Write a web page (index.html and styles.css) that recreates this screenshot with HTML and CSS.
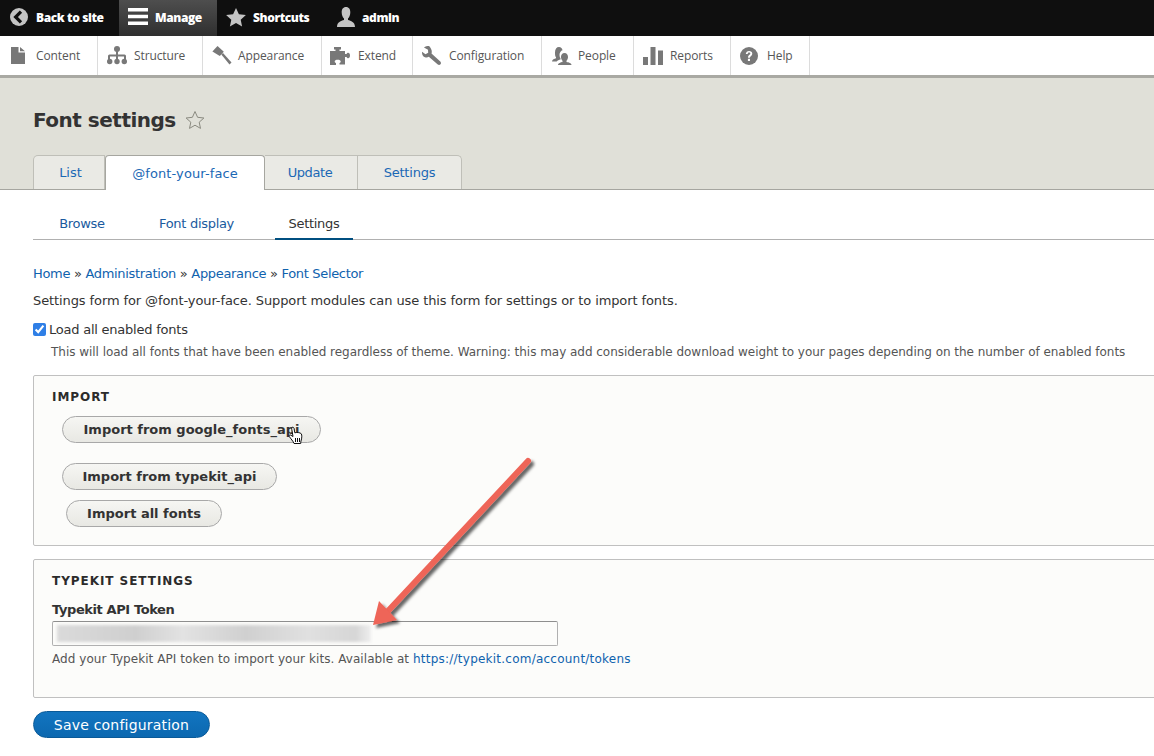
FILE: index.html
```html
<!DOCTYPE html>
<html>
<head>
  <meta charset="utf-8">
  <meta name="viewport" content="width=device-width, initial-scale=1.0">
  <title>Font settings</title>
  <link rel="stylesheet" href="styles.css">
</head>
<body>
  <!-- black toolbar -->
  <div class="toolbar">
    <a class="bar-item back">
      <svg width="20" height="20" viewBox="0 0 20 20"><circle cx="10" cy="10" r="9" fill="#c4c4c4"/><path d="M12 4.600 6.600 10l5.400 5.400" fill="none" stroke="#0f0f0f" stroke-width="3.200"/></svg>
      Back to site
    </a>
    <a class="bar-item manage">
      <svg width="20" height="18" viewBox="0 0 20 18"><path d="M0 0h20v3.400H0zM0 6.800h20v3.400H0zM0 13.600h20V17H0z" fill="#fff"/></svg>
      Manage
    </a>
    <a class="bar-item shortcuts">
      <svg width="20" height="19" viewBox="0 0 20 19"><path d="M10 0l2.900 6.300 7 .8-5.200 4.600 1.400 6.800L10 15.100l-6.100 3.400 1.400-6.800L.1 7.100l7-.8z" fill="#c4c4c4"/></svg>
      Shortcuts
    </a>
    <a class="bar-item user">
      <svg width="20" height="20" viewBox="0 0 20 20"><path d="M10 0c3 0 4.300 2.400 4.300 5.400 0 2.600-1 4.700-2.300 6v1.700c2.800.8 7 2 7 6.900H1c0-4.900 4.200-6.100 7-6.900v-1.700c-1.300-1.300-2.300-3.400-2.300-6C5.700 2.400 7 0 10 0z" fill="#c4c4c4"/></svg>
      admin
    </a>
  </div>

  <!-- admin menu -->
  <div class="tray">
    <a class="tray-item i-content">
      <svg width="14" height="17" viewBox="0 0 14 17"><path d="M0 0h7.500v5.500H14V17H0zM9 0l5 4.200H9z" fill="#787878"/></svg>
      Content
    </a>
    <a class="tray-item i-structure">
      <svg width="20" height="19" viewBox="0 0 20 19"><g fill="#787878"><circle cx="10" cy="3" r="3"/><circle cx="2.700" cy="15.500" r="2.700"/><circle cx="10" cy="15.500" r="2.700"/><circle cx="17.300" cy="15.500" r="2.700"/><path d="M9 5h2v3.500h6.500a1.500 1.500 0 0 1 1.500 1.500v4h-2v-3.500h-6V14H9v-3.500H3V14H1v-4a1.500 1.500 0 0 1 1.500-1.500H9z"/></g></svg>
      Structure
    </a>
    <a class="tray-item i-appearance">
      <svg width="20" height="19" viewBox="0 0 20 19"><g fill="#787878"><path d="M5.500 0 11.800 5.800 7.800 10 .4 5.600z"/><path d="M9.300 8.500 11 7l8.500 9.500-2 2z"/></g></svg>
      Appearance
    </a>
    <a class="tray-item i-extend">
      <svg width="20" height="18" viewBox="0 0 20 18"><path d="M0 4h5.500V2.500H4V0h7v2.500H9.500V4H15v3h1.500c.5-1 1-1.300 1.700-1.300 1 0 1.800 1 1.800 2.800 0 1.800-.8 2.800-1.800 2.800-.7 0-1.200-.3-1.700-1.300H15v7.500H9.500v-1.500c1-.5 1.200-1 1.200-1.600 0-.9-1.200-1.600-3-1.600s-3 .7-3 1.600c0 .6.300 1.100 1.300 1.600V18H0z" fill="#787878"/></svg>
      Extend
    </a>
    <a class="tray-item i-config">
      <svg width="20" height="19" viewBox="0 0 20 19"><path d="M6.800 0C4.500-.3 2 1.500 2 1.500l4 2.300.2 3L3.500 8.300 0 5.800C-.2 8.500 1 10.500 3 11.200c1.300.4 2.700.2 3.800-.4l9 7.700c.8.700 2 .6 2.700-.2.700-.8.600-2-.2-2.700L9.500 7.500c.4-1.200.4-2.700-.2-4C8.800 2 8 .5 6.800 0z" fill="#787878"/></svg>
      Configuration
    </a>
    <a class="tray-item i-people">
      <svg width="20" height="18" viewBox="0 0 20 18"><g fill="#787878"><path d="M12.500 6c2.300 0 3.500 1.800 3.500 4 0 1.500-.6 2.800-1.500 3.700V15c2 .4 5 1 5 3H6c0-2 3-2.600 4.500-3v-1.300C9.600 12.800 9 11.500 9 10c0-2.200 1.200-4 3.500-4z"/><path d="M7 0c2 0 3.300 1.300 3.500 3.300-1.700.5-3 2.300-3 4.700 0 1.300.4 2.600 1 3.500v1c-1.500.4-3 1-3.800 2H0c0-2 2.500-2.800 4-3.200v-1C3.200 9.400 3 8 3 5.500 3 2 4.500 0 7 0z"/></g></svg>
      People
    </a>
    <a class="tray-item i-reports">
      <svg width="20" height="18" viewBox="0 0 20 18"><path d="M0 10h5v8H0zM7.500 0h5v18h-5zM15 3.500h5V18h-5z" fill="#787878"/></svg>
      Reports
    </a>
    <a class="tray-item i-help">
      <svg width="18" height="18" viewBox="0 0 18 18"><circle cx="9" cy="9" r="9" fill="#787878"/><path d="M5.800 6.900C6 5 7.300 4 9.100 4c1.900 0 3.200 1.100 3.200 2.700 0 2.300-2.400 2.300-2.400 4H8c0-2.800 2.300-2.800 2.300-4.100 0-.6-.5-1-1.200-1-.8 0-1.300.5-1.400 1.300zM7.900 11.700H10v2.200H7.900z" fill="#fff"/></svg>
      Help
    </a>
  </div>

  <div class="page-head">
    <h1 class="page-title">Font settings
      <svg class="title-star" width="20" height="20" viewBox="0 0 20 19"><path d="M10 1l2.600 5.800 6.300.7-4.700 4.200 1.300 6.200L10 14.700l-5.500 3.200 1.300-6.200L1.100 7.500l6.300-.7z" fill="none" stroke="#8a8a80"/></svg>
    </h1>
    <div class="tabs">
      <a class="tab t-list">List</a>
      <a class="tab t-font active">@font-your-face</a>
      <a class="tab t-update">Update</a>
      <a class="tab t-settings">Settings</a>
    </div>
  </div>

  <div class="content">
    <div class="subtabs">
      <a class="subtab s-browse">Browse</a>
      <a class="subtab s-display">Font display</a>
      <a class="subtab s-settings active">Settings</a>
    </div>

    <div class="breadcrumb"><a>Home</a> » <a>Administration</a> » <a>Appearance</a> » <a>Font Selector</a></div>
    <p class="intro">Settings form for @font-your-face. Support modules can use this form for settings or to import fonts.</p>

    <label class="check-row"><input type="checkbox" checked> Load all enabled fonts</label>
    <p class="description check-desc">This will load all fonts that have been enabled regardless of theme. Warning: this may add considerable download weight to your pages depending on the number of enabled fonts</p>

    <div class="panel panel-import">
      <h2 class="panel-title">IMPORT</h2>
      <div class="buttons">
        <a class="button b-google">Import from google_fonts_api</a>
        <a class="button b-typekit">Import from typekit_api</a>
        <a class="button b-all">Import all fonts</a>
      </div>
    </div>

    <div class="panel panel-typekit">
      <h2 class="panel-title">TYPEKIT SETTINGS</h2>
      <label class="field-label">Typekit API Token</label>
      <div class="token-input"><div class="token-blur"></div></div>
      <p class="description token-desc">Add your Typekit API token to import your kits. Available at <a>https://typekit.com/account/tokens</a></p>
    </div>

    <a class="save">Save configuration</a>
  </div>

  <!-- annotations on top of the screenshot -->
  <svg class="cursor" width="16" height="20" viewBox="0 0 16 20"><path d="M4 1.500c.8-.6 1.800-.2 2 .8l.8 4.500c1.500-.6 5.500-.4 6.500 1 .8 1.200.6 4.500-.3 7.200-.2.700-.3 1.500-.3 2.500H6c-.5-2-3.500-5-4.700-7-.5-1 .4-2 1.500-1.300L5 10.500 3.800 3.500c-.1-.8-.2-1.600.2-2z" fill="#fff" stroke="#111" stroke-width="1"/><path d="M7.500 12v4M9.500 12v4M11.500 12v4" stroke="#111"/></svg>
  <svg class="arrow" width="190" height="190" viewBox="0 0 190 190">
    <defs><filter id="arrow-shadow" x="-10%" y="-10%" width="125%" height="125%"><feDropShadow dx="3" dy="3" stdDeviation="1.500" flood-color="#000" flood-opacity=".6"/></filter></defs>
    <g filter="url(#arrow-shadow)" fill="#ee6558">
      <path d="M166 10 26 160" stroke="#ee6558" stroke-width="6" stroke-linecap="round"/>
      <path d="M11 174 17 150 35 169z"/>
    </g>
  </svg>
</body>
</html>
```

FILE: styles.css
```css
* {
    box-sizing: border-box;
}
html, body {
    overflow: hidden;
}
body {
    margin: 0;
    height: 756px;
    position: relative;
    background-color: #fff;
    font-family: "DejaVu Sans", sans-serif;
    font-size: 13px;
    color: #333;
}
a {
    color: #0f62ae;
    text-decoration: none;
}
p {
    margin: 0;
}

/* Toolbar */
.toolbar {
    display: flex;
    height: 36px;
    background-color: #0f0f0f;
}
.bar-item {
    display: flex;
    align-items: center;
    gap: 7px;
    padding: 0 0 2px 9px;
    color: #fff;
    font-family: "Open Sans", sans-serif;
    font-size: 12px;
    font-weight: 800;
    letter-spacing: -0.4px;
}
.back {
    width: 119px;
}
.manage {
    width: 98px;
    background: linear-gradient(#4e4e4e, #2f2f2f);
}
.shortcuts {
    width: 110px;
}
.user {
    width: auto;
    gap: 6px;
}

/* Tray */
.tray {
    display: flex;
    height: 42px;
    border-bottom: 3px solid #a9a9a3;
    background-color: #fff;
}
.tray-item {
    display: flex;
    align-items: center;
    gap: 8px;
    padding-left: 11px;
    border-right: 1px solid #dcdcdc;
    color: #565656;
    font-family: "Open Sans", sans-serif;
    font-size: 12px;
    letter-spacing: -0.1px;
}
.i-content { width: 98px; gap: 11px; }
.i-structure { width: 105px; padding-left: 9px; gap: 7px; }
.i-appearance { width: 119px; padding-left: 9px; gap: 6px; }
.i-extend { width: 91px; padding-left: 8px; gap: 8px; }
.i-config { width: 129px; padding-left: 9px; gap: 7px; }
.i-people { width: 92px; padding-left: 10px; gap: 6px; }
.i-reports { width: 97px; padding-left: 9px; gap: 7px; }
.i-help { width: 79px; padding-left: 9px; gap: 9px; }

/* Header */
.page-head {
    height: 112px;
    padding: 28px 0 0 33px;
    background-color: #e0e0d8;
    border-bottom: 1px solid #a6a6a0;
}
.page-title {
    display: flex;
    align-items: center;
    gap: 9px;
    height: 27px;
    margin: 0 0 22px 0;
    font-size: 20px;
    font-weight: 700;
    letter-spacing: -0.5px;
    color: #333;
}
.tabs {
    display: flex;
    height: 35px;
}
.tab {
    display: flex;
    align-items: center;
    justify-content: center;
    height: 34px;
    background-color: #eaeae5;
    border: 1px solid #bfbfb8;
    border-left: 0;
    border-bottom: 0;
    font-size: 13px;
    color: #1a68b5;
}
.t-list { width: 72px; padding-left: 3px; border-left: 1px solid #bfbfb8; border-top-left-radius: 5px; }
.t-font { letter-spacing: 0.1px; }
.t-update { width: 93px; padding-right: 2px; letter-spacing: -0.4px; }
.t-settings { width: 104px; border-top-right-radius: 5px; letter-spacing: -0.2px; }
.tab.active {
    width: 160px;
    height: 35px;
    background-color: #fff;
    border: 1px solid #a6a6a0;
    border-bottom: 0;
    border-radius: 4px 4px 0 0;
}

/* Content */
.content {
    padding-left: 33px;
}
.subtabs {
    display: flex;
    height: 50px;
    border-bottom: 1px solid #b0b0b0;
}
.subtab {
    display: flex;
    align-items: center;
    justify-content: center;
    height: 50px;
    padding-top: 17px;
    font-size: 13px;
    letter-spacing: -0.3px;
    color: #1a5a9e;
}
.s-browse { width: 98px; }
.s-display { width: 131px; margin-right: 13px; }
.subtab.active {
    width: 78px;
    padding-top: 19px;
    color: #333;
    border-bottom: 2px solid #004f80;
}
.breadcrumb {
    margin-top: 25px;
    height: 18px;
    line-height: 18px;
    letter-spacing: -0.32px;
    color: #333;
}
.breadcrumb a {
    color: #0f62ae;
}
.intro {
    margin-top: 9px;
    height: 18px;
    line-height: 18px;
    letter-spacing: -0.1px;
    color: #333;
}
.check-row {
    display: flex;
    align-items: center;
    gap: 3px;
    margin-top: 10px;
    height: 18px;
    letter-spacing: -0.23px;
}
.check-row input {
    width: 13px;
    height: 13px;
    margin: 0;
    accent-color: #2f7fe6;
}
.description {
    font-size: 12px;
    color: #555;
}
.check-desc {
    margin-top: 6px;
    margin-left: 18px;
    height: 16px;
    line-height: 16px;
    letter-spacing: -0.03px;
    white-space: nowrap;
}

/* Panels */
.panel {
    margin-right: -12px;
    background-color: #fcfcfa;
    border: 1px solid #c0c0c0;
    border-radius: 2px;
    padding: 13px 18px;
}
.panel-import {
    margin-top: 15px;
    height: 171px;
}
.panel-typekit {
    margin-top: 13px;
    height: 139px;
}
.panel-title {
    margin: 0;
    font-size: 12px;
    line-height: 16px;
    font-weight: 700;
    letter-spacing: 0.95px;
    color: #2b2b2b;
}
.buttons {
    display: flex;
    flex-direction: column;
    align-items: flex-start;
}
.button {
    display: flex;
    align-items: center;
    justify-content: center;
    height: 27px;
    margin-left: 10px;
    background: linear-gradient(#f6f6f3, #e8e8e3);
    border: 1px solid #a8a8a8;
    border-radius: 14px;
    font-size: 13px;
    font-weight: 700;
    color: #333;
    white-space: nowrap;
}
.b-google { width: 259px; margin-top: 11px; }
.b-typekit { width: 215px; margin-top: 20px; }
.b-all { width: 156px; margin-top: 10px; margin-left: 14px; }
.field-label {
    display: block;
    margin-top: 13px;
    height: 16px;
    line-height: 16px;
    font-size: 13px;
    font-weight: 700;
    letter-spacing: -0.4px;
    color: #333;
}
.token-input {
    width: 506px;
    height: 25px;
    margin-top: 3px;
    padding: 3px 4px;
    border: 1px solid #b0b0b0;
    border-top-color: #8e8e8e;
    border-radius: 2px;
    background-color: #fcfcfa;
}
.token-blur {
    width: 314px;
    height: 17px;
    background: linear-gradient(90deg, #dadada, #cfcfcf 25%, #e2e2e2 40%, #d0d0d0 60%, #e0e0e0 80%, #d6d6d6 95%, #eee);
    filter: blur(1.5px);
}
.token-desc {
    margin-top: 4px;
    line-height: 18px;
    letter-spacing: 0.06px;
}
.token-desc a {
    color: #0f62ae;
    letter-spacing: 0.23px;
}
.save {
    display: flex;
    align-items: center;
    justify-content: center;
    width: 177px;
    height: 27px;
    margin-top: 13px;
    background: linear-gradient(#1275c0, #0c68b0);
    border: 1px solid #0a5a98;
    border-radius: 14px;
    color: #fff;
    font-size: 14px;
    letter-spacing: 0.2px;
}

/* Annotations */
.cursor {
    position: absolute;
    left: 288px;
    top: 426px;
}
.arrow {
    position: absolute;
    left: 362px;
    top: 451px;
}
```
